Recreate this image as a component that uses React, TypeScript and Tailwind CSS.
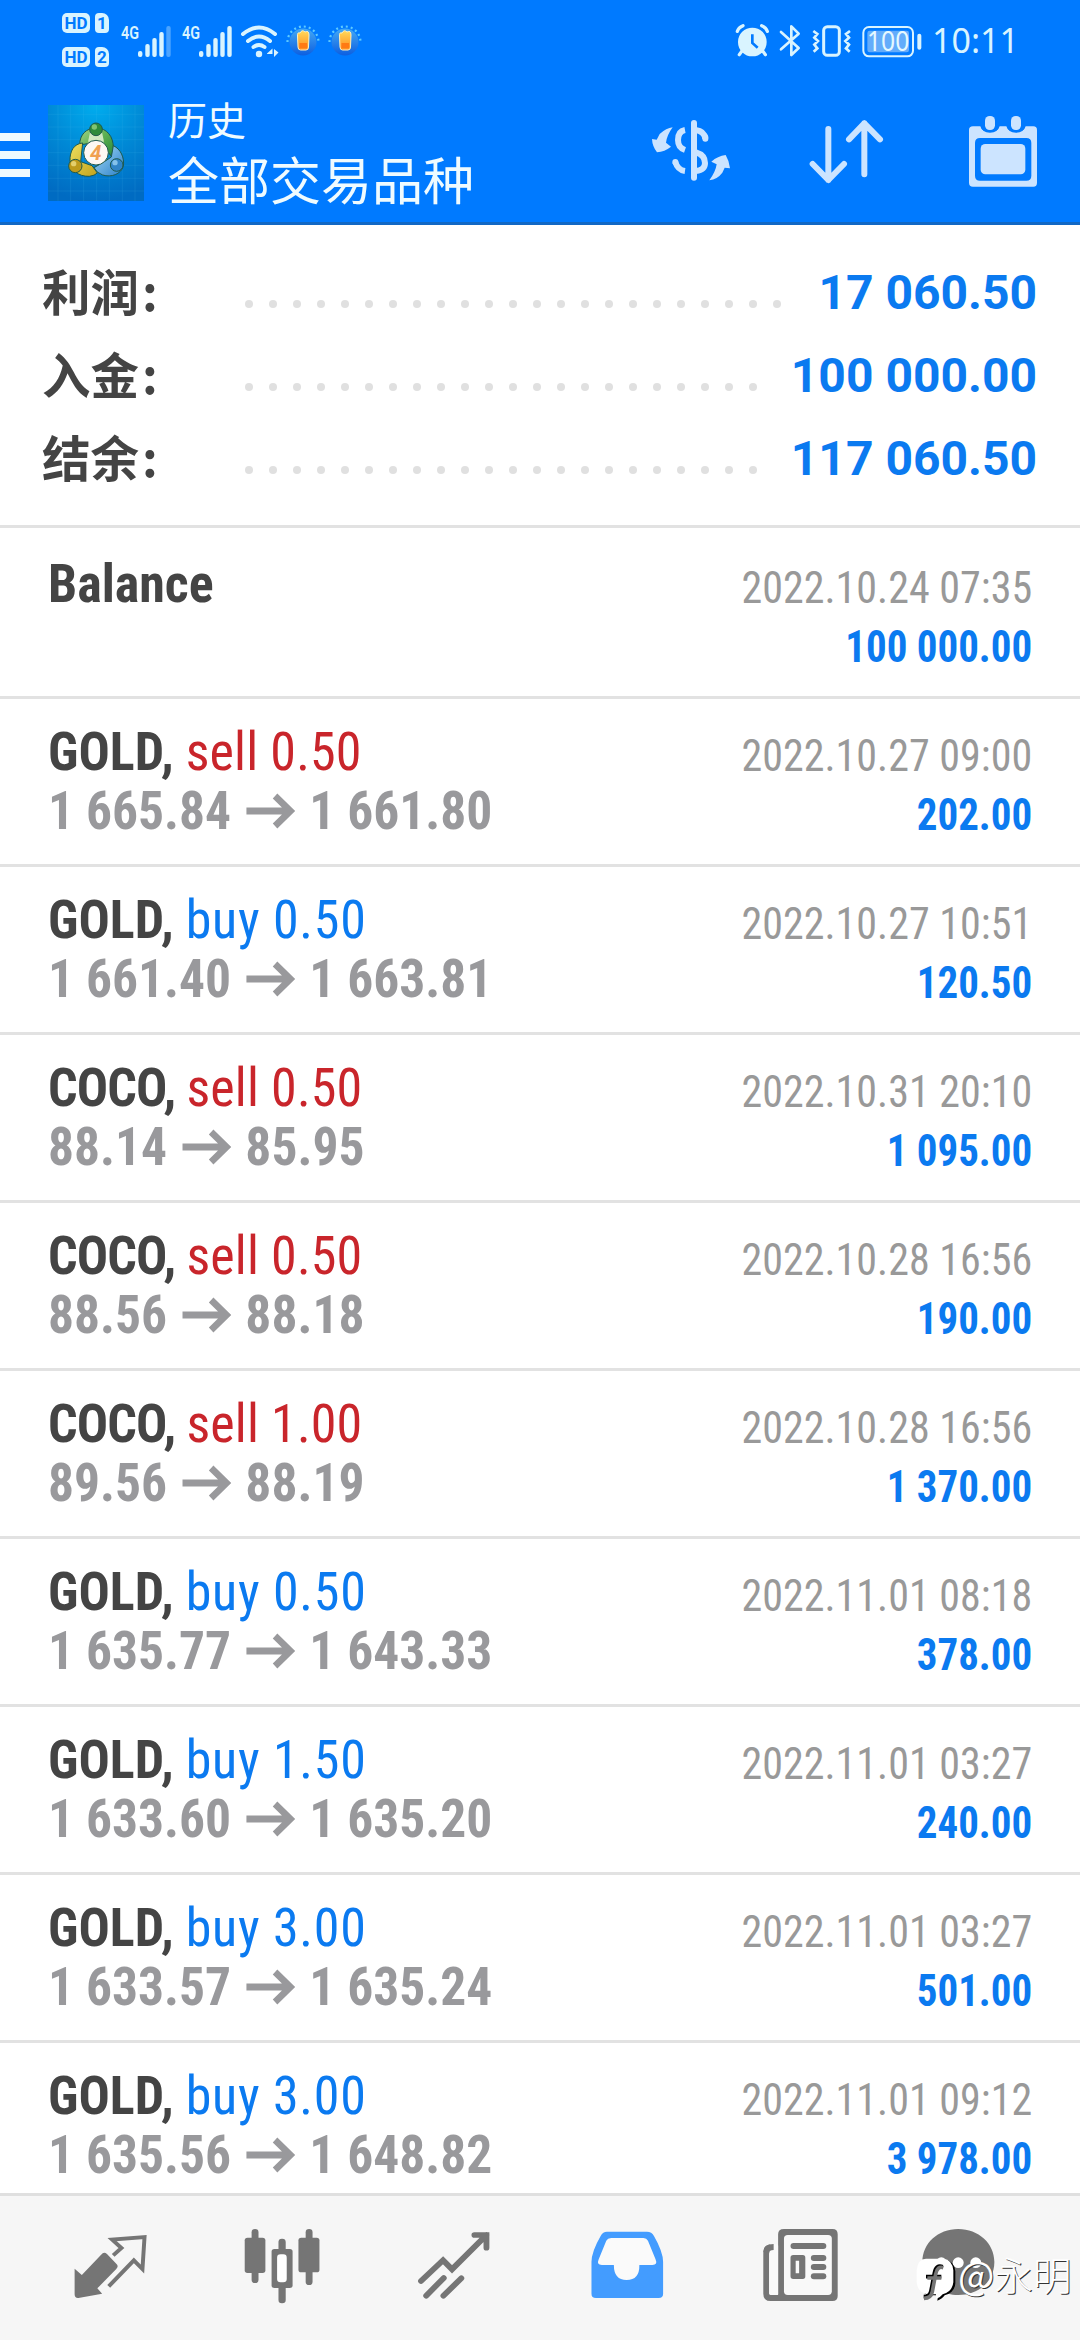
import React from "react";

type Deal = {
  symbol: string;
  side?: "buy" | "sell";
  volume?: string;
  open?: string;
  close?: string;
  time: string;
  profit: string;
};

const summary = [
  { label: "利润", value: "17 060.50", dots: 23 },
  { label: "入金", value: "100 000.00", dots: 22 },
  { label: "结余", value: "117 060.50", dots: 22 },
];

const deals: Deal[] = [
  { symbol: "Balance", time: "2022.10.24 07:35", profit: "100 000.00" },
  { symbol: "GOLD", side: "sell", volume: "0.50", open: "1 665.84", close: "1 661.80", time: "2022.10.27 09:00", profit: "202.00" },
  { symbol: "GOLD", side: "buy", volume: "0.50", open: "1 661.40", close: "1 663.81", time: "2022.10.27 10:51", profit: "120.50" },
  { symbol: "COCO", side: "sell", volume: "0.50", open: "88.14", close: "85.95", time: "2022.10.31 20:10", profit: "1 095.00" },
  { symbol: "COCO", side: "sell", volume: "0.50", open: "88.56", close: "88.18", time: "2022.10.28 16:56", profit: "190.00" },
  { symbol: "COCO", side: "sell", volume: "1.00", open: "89.56", close: "88.19", time: "2022.10.28 16:56", profit: "1 370.00" },
  { symbol: "GOLD", side: "buy", volume: "0.50", open: "1 635.77", close: "1 643.33", time: "2022.11.01 08:18", profit: "378.00" },
  { symbol: "GOLD", side: "buy", volume: "1.50", open: "1 633.60", close: "1 635.20", time: "2022.11.01 03:27", profit: "240.00" },
  { symbol: "GOLD", side: "buy", volume: "3.00", open: "1 633.57", close: "1 635.24", time: "2022.11.01 03:27", profit: "501.00" },
  { symbol: "GOLD", side: "buy", volume: "3.00", open: "1 635.56", close: "1 648.82", time: "2022.11.01 09:12", profit: "3 978.00" },
];

const sideStyle = {
  buy: "tracking-[0.75px] text-[#0b7af0]",
  sell: "tracking-[0.15px] text-[#c9252b]",
};

function HdBadge({ n }: { n: string }) {
  return (
    <div className="flex h-5 gap-[5px] text-[17px] leading-5 font-bold text-[#007aff]">
      <span className="w-7 rounded-[5px] bg-[#d9f4ff] text-center">HD</span>
      <span className="w-[14px] rounded-[4px] rounded-tr-[7px] bg-[#d9f4ff] text-center">{n}</span>
    </div>
  );
}

function Signal({ last }: { last: string }) {
  return (
    <svg className="h-9 w-[52px]" viewBox="0 0 52 36" fill="#d9f4ff">
      <text x="0" y="17" fontSize="19" fontWeight="600" fontFamily="Roboto" textLength="18" lengthAdjust="spacingAndGlyphs">4G</text>
      <rect x="17" y="29" width="4.4" height="6" rx="2" />
      <rect x="24.3" y="22" width="4.4" height="13" rx="2" />
      <rect x="31.3" y="16" width="4.4" height="19" rx="2" />
      <rect x="38.3" y="10" width="4.4" height="25" rx="2" />
      <rect x="45.3" y="4" width="4.4" height="31" rx="2" fillOpacity={last} />
    </svg>
  );
}

function Wifi() {
  return (
    <svg className="h-9 w-[40px]" viewBox="0 0 40 36" fill="none" stroke="#d9f4ff" strokeWidth="4" strokeLinecap="round">
      <path d="M3 12Q19 -1 35 12M8 19Q19 10 30 19M13.5 25Q19 21 24.5 25" />
      <circle cx="19" cy="32" r="3.2" fill="#d9f4ff" stroke="none" />
      <path d="M27 31.5L32.500 26.500V35V32H27ZM34 27L38.500 30.500L34 35Z" fill="#d9f4ff" stroke="none" />
    </svg>
  );
}

function Mug() {
  return (
    <svg className="h-9 w-9" viewBox="0 0 36 36">
      <defs>
        <linearGradient id="disc" x1="0" y1="0" x2="0" y2="1">
          <stop offset="0" stopColor="#44a9f5" />
          <stop offset="1" stopColor="#0d5fe0" />
        </linearGradient>
        <linearGradient id="beer" x1="0" y1="0" x2="0" y2="1">
          <stop offset="0" stopColor="#ffd95a" />
          <stop offset="1" stopColor="#ff8a1c" />
        </linearGradient>
      </defs>
      <path d="M2.500 20A15.500 15.500 0 0 1 33.500 20" fill="none" stroke="#5ecbff" strokeWidth="2.200" strokeDasharray="2 3" />
      <circle cx="18" cy="20" r="13.500" fill="url(#disc)" />
      <path d="M12.500 14Q12 10 15 11Q17 7 20 10Q24 8 24 13L23.500 25Q23.500 28 21 28H15.500Q13 28 13 25Z" fill="url(#beer)" stroke="#fff0c0" strokeWidth="1" />
      <path d="M14.500 21H22V26H14.500Z" fill="#ff7a14" />
    </svg>
  );
}

function StatusRight() {
  return (
    <svg className="h-9 w-[190px]" viewBox="0 0 570 108" fill="none" stroke="#d9f4ff">
      <circle cx="52" cy="57" r="43" fill="#d9f4ff" stroke="none" />
      <path d="M7 25Q10 14 24 8M97 25Q94 14 80 8M20 85L13 95M84 85L91 95" strokeWidth="10" strokeLinecap="round" />
      <path d="M52 34V60L68 74" stroke="#007aff" strokeWidth="8" />
      <path d="M138 27L191 75L169 96V10L191 32L138 79" strokeWidth="8" strokeLinejoin="round" strokeLinecap="round" />
      <rect x="266" y="11" width="47" height="86" rx="11" strokeWidth="9" />
      <path d="M235 24L247 33L238 44L249 54L238 65L247 76L236 86M345 24L333 33L342 44L331 54L342 65L333 76L344 86" strokeWidth="8" />
      <rect x="385" y="12" width="149" height="88" rx="17" strokeWidth="6" />
      <rect x="397" y="23" width="125" height="65" rx="7" fill="#63acfb" stroke="none" />
      <text x="396" y="84" fontSize="80" fontFamily="Noto Sans" fill="#e5f8ff" stroke="none" textLength="127" lengthAdjust="spacingAndGlyphs">100</text>
      <rect x="547" y="32" width="12" height="48" rx="6" fill="#d9f4ff" stroke="none" />
    </svg>
  );
}

function AppLogo() {
  return (
    <svg className="h-24 w-24" viewBox="0 0 288 288">
      <defs>
        <radialGradient id="sky" cx=".5" cy="0" r="1">
          <stop offset="0" stopColor="#00adef" />
          <stop offset=".5" stopColor="#0089d6" />
          <stop offset="1" stopColor="#006bc2" />
        </radialGradient>
        <linearGradient id="green" x1="0" y1="0" x2="1" y2="1">
          <stop offset="0" stopColor="#a5d58a" />
          <stop offset=".5" stopColor="#5db052" />
          <stop offset="1" stopColor="#2a8a3c" />
        </linearGradient>
        <linearGradient id="gold" x1="0" y1="0" x2="1" y2="1">
          <stop offset="0" stopColor="#efe060" />
          <stop offset="1" stopColor="#c2a21c" />
        </linearGradient>
        <linearGradient id="blue" x1="0" y1="0" x2="1" y2="1">
          <stop offset="0" stopColor="#a5dbf7" />
          <stop offset="1" stopColor="#2a7fc8" />
        </linearGradient>
      </defs>
      <rect width="288" height="288" fill="url(#sky)" />
      <path d="M30 0V288M68 0V288M107 0V288M146 0V288M184 0V288M223 0V288M261 0V288M0 28H288M0 66H288M0 104H288M0 143H288M0 181H288M0 220H288M0 258H288" stroke="#4fc0ef" strokeOpacity=".2" strokeWidth="2" />
      <g stroke="#1f5a4c" strokeWidth="3">
        <path d="M95 120C95 88 115 70 144 68C178 70 196 95 196 128Q196 142 188 152L172 128L144 104L118 116Z" fill="url(#green)" />
        <path d="M104 114C78 116 65 138 66 168C70 195 90 215 124 214Q140 212 148 204L132 182L98 170Z" fill="url(#gold)" />
        <path d="M196 122C218 132 230 158 226 184C218 208 190 218 164 210Q146 204 138 188L166 172L190 156Z" fill="url(#blue)" />
        <path d="M126 82L120 110H168L162 82Z" fill="#cfe8c0" stroke="none" />
        <circle cx="144" cy="73" r="19" fill="#2e8b3b" />
        <circle cx="82" cy="183" r="20" fill="#bd9a1c" />
        <circle cx="206" cy="180" r="19" fill="#2f83c6" />
        <circle cx="144" cy="143" r="37" fill="#fdf8f4" />
      </g>
      <circle cx="139" cy="66" r="8" fill="#a5dc8a" fillOpacity=".7" />
      <circle cx="77" cy="176" r="8" fill="#f5e590" fillOpacity=".7" />
      <circle cx="201" cy="173" r="8" fill="#a8dcfa" fillOpacity=".7" />
      <text x="143" y="165" textAnchor="middle" fontSize="62" fontWeight="700" fontStyle="italic" fontFamily="Roboto" fill="#f0a050">4</text>
    </svg>
  );
}

const iconTint = "#cce4ff";

function CurrencyIcon() {
  return (
    <svg className="h-[72px] w-20" viewBox="90 350 240 216">
      <g fill="none" stroke={iconTint} strokeWidth="18">
        <path d="M192 392Q171 396 171 422Q171 445 192 452" />
        <path d="M224 392Q250 395 253 418M163 488Q170 512 192 515" />
        <path d="M225 459Q252 467 252 491Q252 512 225 515" />
        <path d="M219 371V535M253 414V418M163 488V489" strokeLinecap="round" />
      </g>
      <path d="M155 384Q136 386 116 404L107 421L93 419Q94 441 108 459Q131 457 150 442L135 430Q138 407 155 384Z" fill={iconTint} />
      <path d="M265 543Q289 540 304 520L311 505L327 507Q325 485 314 467Q290 470 271 487L287 495Q284 517 265 543Z" fill={iconTint} />
    </svg>
  );
}

function SortIcon() {
  return (
    <svg className="h-[72px] w-20" viewBox="560 350 240 216" fill="none" stroke={iconTint} strokeWidth="18" strokeLinecap="round" strokeLinejoin="round">
      <path d="M624 389V542M577 494L624 542L671 494M732 525V372M686 420L732 372L779 420" />
    </svg>
  );
}

function CalendarIcon() {
  return (
    <svg className="h-[72px] w-20" viewBox="1026 350 240 216" fill={iconTint}>
      <path d="M1056 381H1078Q1082 398 1107 398Q1131 398 1136 381H1156Q1161 398 1185 398Q1209 398 1214 381H1237Q1248 381 1248 392V550Q1248 562 1237 562H1056Q1044 562 1044 550V392Q1044 381 1056 381ZM1077 416Q1062 416 1062 431V529Q1062 544 1077 544H1216Q1231 544 1231 529V431Q1231 416 1216 416Z" fillRule="evenodd" />
      <rect x="1079" y="434" width="134" height="91" rx="14" />
      <rect x="1092" y="350" width="30" height="42" rx="14" />
      <rect x="1170" y="350" width="30" height="42" rx="14" />
      <path d="M1083 378Q1086 397 1107 397Q1128 397 1131 378M1161 378Q1164 397 1185 397Q1206 397 1209 378" fill="none" stroke="#007aff" strokeWidth="7" />
    </svg>
  );
}

function TabIcon({ x, children }: { x: number; children: React.ReactNode }) {
  return (
    <svg className="h-36 w-[172px]" viewBox={`${x} 48 499.5 432`} preserveAspectRatio="none" fill="#757575">
      {children}
    </svg>
  );
}

function TabBar() {
  return (
    <nav className="relative flex h-[147px] shrink-0 border-t-[3px] border-[#dfdfdf] bg-[#f6f6f6] pl-6">
      <TabIcon x={68}>
        <path d="M215 266L236 285L292 224Q300 214 309 222L336 251Q344 259 336 267L281 325L295 341L226 354Q215 355 215 343Z" />
        <path d="M327 226L351 204L324 179L418 171L412 267L387 241L314 319" fill="none" stroke="#757575" strokeWidth="11.500" />
      </TabIcon>
      <TabIcon x={567.5}>
        <rect x="729" y="147" width="20" height="162" rx="10" />
        <rect x="709" y="173" width="60" height="106" rx="8" />
        <rect x="886" y="147" width="20" height="168" rx="10" />
        <rect x="865" y="173" width="61" height="104" rx="8" />
        <rect x="807" y="176" width="21" height="194" rx="10" />
        <rect x="787" y="207" width="61" height="117" rx="8" />
        <rect x="803" y="223" width="28" height="84" rx="10" fill="#fff" />
      </TabIcon>
      <TabIcon x={1067}>
        <path d="M1221 303L1285 241L1311 268L1411 165M1376 165H1411V203M1236 347L1287 294M1286 347L1338 295" fill="none" stroke="#757575" strokeWidth="17" strokeLinecap="round" />
      </TabIcon>
      <TabIcon x={-1.5}>
        <path d="M193 155H309Q323 155 329 167Q356 215 356 246V341Q356 354 343 354H161Q148 354 148 341V246Q148 215 175 167Q181 155 193 155Z" fill="#439cff" />
        <path d="M205 174H299Q308 174 312 182L334 238Q341 255 325 255H287Q288 300 250 300Q213 300 213 255H178Q162 255 169 238L191 182Q195 174 205 174Z" fill="#fafafa" />
      </TabIcon>
      <TabIcon x={498}>
        <path d="M707 147H848Q863 147 863 163V348Q863 363 848 363H668Q647 363 647 341V215Q647 192 677 192V210Q664 210 664 220V338Q664 345 670 345H690V163Q690 147 707 147Z" />
        <rect x="664" y="192" width="26" height="153" rx="5" fill="#f9f9f9" />
        <path d="M647 215Q647 192 677 192V210Q664 210 664 220Z" />
        <rect x="707" y="165" width="139" height="180" rx="11" fill="#f9f9f9" />
        <rect x="726" y="189" width="104" height="18" rx="9" />
        <path d="M734 225H762Q769 225 769 233V289Q769 297 762 297H734Q726 297 726 289V233Q726 225 734 225ZM741 242V280H751V242Z" fillRule="evenodd" />
        <rect x="785" y="225" width="45" height="18" rx="9" />
        <rect x="785" y="252" width="45" height="18" rx="9" />
        <rect x="785" y="280" width="45" height="18" rx="9" />
      </TabIcon>
      <TabIcon x={997.5}>
        <path d="M1213 147C1272 147 1318 190 1318 246C1318 303 1274 345 1213 345C1190 345 1175 340 1160 333L1120 348L1125 305Q1109 280 1109 246C1109 190 1154 147 1213 147Z" />
        <circle cx="1164" cy="248" r="16" fill="#fff" />
        <circle cx="1213" cy="248" r="16" fill="#fff" />
        <circle cx="1264" cy="248" r="16" fill="#fff" />
      </TabIcon>
      <div className="absolute top-[56px] left-[916px] flex">
        <svg className="h-[52px] w-[42px]" viewBox="0 0 126 156">
          <path d="M32 23H86Q115 26 118 58V94Q116 122 86 130Q80 140 64 146L66 130H42Q12 126 8 92V56Q10 24 32 23Z" fill="#000" />
          <path d="M30 20H82Q109 23 112 55V91Q109 119 80 127Q74 136 60 141L60 127H36Q5 123 2 91V55Q4 21 30 20Z" fill="#fff" />
          <path d="M80 44Q60 36 55 63L45 116Q42 134 23 134M30 74H76" fill="none" stroke="#000" strokeWidth="11" />
          <path d="M82 47Q64 41 59 66L49 119Q45 139 24 139M34 78H76" fill="none" stroke="#757575" strokeWidth="11" />
        </svg>
        <span className="-mt-[5px] font-['Noto_Sans_CJK_SC',sans-serif] text-[38.5px] leading-[52px] font-light text-white [text-shadow:1px_1px_0_#333]">
          <span className="font-normal">@</span>永明
        </span>
      </div>
    </nav>
  );
}

function DealRow({ deal }: { deal: Deal }) {
  return (
    <div className="flex h-[168px] shrink-0 justify-between border-b-[3px] border-[#e2e2e2] px-12 pt-[23px] font-[Roboto,sans-serif] whitespace-nowrap [font-stretch:75%]">
      <div className="origin-left scale-x-[0.954] text-[54.5px] leading-[59px]">
        <div>
          <span className={deal.symbol === "COCO" ? "font-bold tracking-[-0.9px] text-[#444]" : "font-bold text-[#444]"}>
            {deal.symbol}{deal.side ? ", " : ""}
          </span>
          {deal.side && (
            <span className={sideStyle[deal.side]}>
              {deal.side} {deal.volume}
            </span>
          )}
        </div>
        {deal.open && (
          <div className="flex items-center text-[54px] font-bold text-[#99999c]">
            <span>{deal.open}</span>
            <svg className="mx-[15px] h-9 w-[52px]" viewBox="0 0 52 36" fill="none" stroke="#99999c" strokeWidth="7">
              <path d="M1 18H47M31 3L47 18L31 33" />
            </svg>
            <span>{deal.close}</span>
          </div>
        )}
      </div>
      <div className="pt-1 text-right text-[45px] leading-[59px]">
        <div className="origin-right scale-x-[0.934] text-[#999]">{deal.time}</div>
        <div className="origin-right scale-x-[0.91] font-bold text-[#0b7af0]">{deal.profit}</div>
      </div>
    </div>
  );
}

export default function App() {
  return (
    <div className="flex h-[2340px] w-[1080px] flex-col overflow-hidden bg-white">
      <header className="flex h-[225px] shrink-0 flex-col border-b-[3px] border-[#1268c4] bg-[#007aff]">
        <div className="flex h-[80px] items-center pl-[62px] font-[Roboto,sans-serif]">
          <div className="flex flex-col gap-[14px]">
            <HdBadge n="1" />
            <HdBadge n="2" />
          </div>
          <div className="ml-3 flex items-center gap-[9px]">
            <Signal last="0.35" />
            <Signal last="1" />
          </div>
          <div className="ml-[6px] flex items-center">
            <Wifi />
            <div className="ml-[5px] flex gap-[6px]">
              <Mug />
              <Mug />
            </div>
          </div>
          <div className="mt-px mr-[61px] ml-auto flex items-center gap-[7px] font-['Noto_Sans',sans-serif] text-[#d9f4ff]">
            <StatusRight />
            <span className="text-[34px]">10:11</span>
          </div>
        </div>
        <div className="flex pt-[18px]">
          <div className="mt-[35px] flex w-[30px] flex-col gap-[10px]">
            <div className="h-2 bg-[#eefaff]" />
            <div className="h-2 bg-[#eefaff]" />
            <div className="h-2 bg-[#eefaff]" />
          </div>
          <div className="mt-[7px] ml-[18px]">
            <AppLogo />
          </div>
          <div className="-mt-[3px] ml-6 font-['Noto_Sans_CJK_SC',sans-serif] text-[#effbff]">
            <div className="text-[39px] leading-[46px]">历史</div>
            <div className="text-[51px] leading-[74px]">全部交易品种</div>
          </div>
          <div className="mt-[18px] mr-[37px] ml-auto flex gap-[76px]">
            <CurrencyIcon />
            <SortIcon />
            <CalendarIcon />
          </div>
        </div>
      </header>

      <section className="flex h-[303px] shrink-0 flex-col border-b-[3px] border-[#e2e2e2] pt-[25px] pr-[43px] pl-[42px]">
        {summary.map((row) => (
          <div key={row.label} className="flex h-[83px] items-center justify-between">
            <div className="-mt-[3px] w-[203px] font-['Noto_Sans_CJK_SC',sans-serif] text-[48.5px] leading-[83px] font-bold text-[#444]">
              {row.label}<span className="pl-[3px]">:</span>
            </div>
            <div className="mt-6 mr-auto flex gap-4">
              {Array.from({ length: row.dots }, (_, i) => (
                <span key={i} className="size-2 rounded-full bg-[#e0e0e0]" />
              ))}
            </div>
            <div className="mt-px font-[Roboto,sans-serif] text-[48px] leading-[83px] font-bold text-[#0b7af0]">{row.value}</div>
          </div>
        ))}
      </section>

      <main className="flex min-h-0 flex-1 flex-col overflow-hidden pt-[3px]">
        {deals.map((deal, i) => (
          <DealRow key={i} deal={deal} />
        ))}
      </main>
      <TabBar />
    </div>
  );
}
